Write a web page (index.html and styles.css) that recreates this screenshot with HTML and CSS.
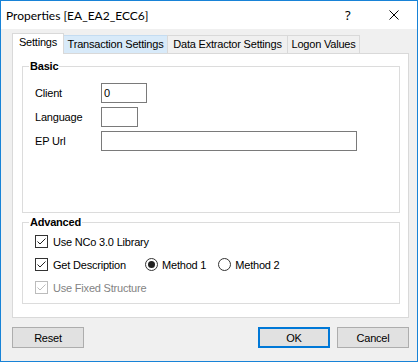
FILE: index.html
```html
<!DOCTYPE html>
<html lang="en">
<head>
    <meta charset="UTF-8">
    <title>Properties [EA_EA2_ECC6]</title>
    <link rel="stylesheet" href="styles.css">
</head>
<body>
    <div class="window">
        <div class="titlebar">
            <span class="title">Properties [EA_EA2_ECC6]</span>
            <span class="help">?</span>
            <span class="close">
                <svg width="10" height="10" viewBox="0 0 10 10"><path d="M0.5 0.5 L9.5 9.5 M9.5 0.5 L0.5 9.5" stroke="#000" stroke-width="1" fill="none"/></svg>
            </span>
        </div>

        <div class="client">
            <!-- Tab strip -->
            <div class="tabs">
                <div class="tab active t1">Settings</div>
                <div class="tab hot t2">Transaction Settings</div>
                <div class="tab t3">Data Extractor Settings</div>
                <div class="tab t4">Logon Values</div>
            </div>

            <div class="panel">
                <!-- Basic group -->
                <fieldset class="group basic">
                    <legend>Basic</legend>
                    <div class="fields">
                        <span class="lbl">Client</span>
                        <div class="box w-client">0</div>
                        <span class="lbl">Language</span>
                        <div class="box w-lang"></div>
                        <span class="lbl">EP Url</span>
                        <div class="box w-url"></div>
                    </div>
                </fieldset>

                <!-- Advanced group -->
                <fieldset class="group advanced">
                    <legend>Advanced</legend>
                    <div class="options">
                        <div class="row">
                            <span class="check on"><svg width="11" height="11" viewBox="0 0 11 11"><path d="M1.5 5.5 L4 8 L9.5 2.5" stroke="#222" stroke-width="1" fill="none"/></svg></span>
                            <span class="text">Use NCo 3.0 Library</span>
                        </div>
                        <div class="row">
                            <div class="item-desc">
                                <span class="check on"><svg width="11" height="11" viewBox="0 0 11 11"><path d="M1.5 5.5 L4 8 L9.5 2.5" stroke="#222" stroke-width="1" fill="none"/></svg></span>
                                <span class="text">Get Description</span>
                            </div>
                            <span class="radio on"></span>
                            <span class="text m1">Method 1</span>
                            <span class="radio"></span>
                            <span class="text">Method 2</span>
                        </div>
                        <div class="row disabled">
                            <span class="check on"><svg width="11" height="11" viewBox="0 0 11 11"><path d="M1.5 5.5 L4 8 L9.5 2.5" stroke="#bcbcbc" stroke-width="1" fill="none"/></svg></span>
                            <span class="text">Use Fixed Structure</span>
                        </div>
                    </div>
                </fieldset>
            </div>

            <div class="buttons">
                <button class="btn">Reset</button>
                <span class="spacer"></span>
                <button class="btn default">OK</button>
                <button class="btn">Cancel</button>
            </div>
        </div>
    </div>
</body>
</html>
```

FILE: styles.css
```css
body {
    margin: 0;
    padding: 0;
    font-family: "Liberation Sans", Arial, sans-serif;
    font-size: 11px;
    letter-spacing: -0.2px;
    color: #000;
}
.window {
    width: 418px;
    height: 362px;
    box-sizing: border-box;
    border: 1px solid #1883d7;
    background: #f0f0f0;
    display: flex;
    flex-direction: column;
}
.titlebar {
    height: 28px;
    background: #fff;
    display: flex;
    align-items: center;
    padding-left: 5px;
}
.title {
    font-family: Lato, sans-serif;
    font-size: 12px;
    letter-spacing: 0;
    flex: 1;
}
.help {
    font-family: "Noto Sans", sans-serif;
    font-size: 13px;
    width: 44px;
}
.close {
    width: 28px;
    display: flex;
}
.client {
    padding: 4px 8px 0 11px;
}
.tabs {
    display: flex;
    align-items: flex-end;
    height: 20px;
}
.tab {
    box-sizing: border-box;
    height: 18px;
    border: 1px solid #d9d9d9;
    border-bottom: none;
    margin-left: -1px;
    text-align: center;
    line-height: 17px;
    background: #f0f0f0;
}
.tab.active {
    height: 21px;
    margin-left: 0;
    margin-bottom: -1px;
    background: #fff;
    position: relative;
    z-index: 1;
    line-height: 16px;
}
.tab.hot {
    background: #d8eaf9;
    border-color: #c4dcf1;
}
.t1 { width: 52px; }
.t2 { width: 105px; }
.t3 { width: 121px; }
.t4 { width: 73px; }
.panel {
    height: 265px;
    box-sizing: border-box;
    border: 1px solid #d9d9d9;
    background: #fff;
    padding: 6px 8px 0 9px;
}
.group {
    margin: 0;
    padding: 0;
    border: 1px solid #dcdcdc;
    min-width: 0;
}
.group legend {
    font-weight: bold;
    line-height: 13px;
    margin-left: 6px;
    padding: 0 1px;
}
.basic {
    height: 153px;
    box-sizing: border-box;
}
.advanced {
    margin-top: 3px;
    height: 88px;
    box-sizing: border-box;
}
.fields {
    display: grid;
    grid-template-columns: 66px auto;
    grid-auto-rows: 20px;
    row-gap: 4px;
    align-items: center;
    padding: 10px 0 0 12px;
}
.box {
    box-sizing: border-box;
    height: 20px;
    border: 1px solid #7a7a7a;
    background: #fff;
    padding: 3px 0 0 2px;
    line-height: 13px;
}
.w-client { width: 46px; }
.w-lang { width: 37px; }
.w-url { width: 256px; }
.options {
    padding: 1px 0 0 12px;
}
.row {
    height: 23px;
    display: flex;
    align-items: center;
}
.item-desc {
    display: flex;
    align-items: center;
    width: 110px;
}
.check {
    box-sizing: border-box;
    width: 13px;
    height: 13px;
    border: 1px solid #333;
    background: #fff;
    display: flex;
    margin-right: 5px;
}
.disabled .check {
    border-color: #bcbcbc;
}
.disabled .text {
    color: #838383;
}
.radio {
    box-sizing: border-box;
    width: 13px;
    height: 13px;
    border: 1px solid #333;
    border-radius: 50%;
    background: #fff;
    margin-right: 4px;
    display: flex;
    align-items: center;
    justify-content: center;
}
.radio.on::after {
    content: "";
    width: 7px;
    height: 7px;
    border-radius: 50%;
    background: #222;
}
.m1 {
    margin-right: 12px;
}
.buttons {
    display: flex;
    gap: 7px;
    margin-top: 9px;
}
.spacer {
    flex: 1;
}
.btn {
    width: 72px;
    height: 21px;
    box-sizing: border-box;
    border: 1px solid #adadad;
    background: #e1e1e1;
    font-family: "Liberation Sans", Arial, sans-serif;
    font-size: 11px;
    letter-spacing: -0.2px;
    color: #000;
    padding: 0;
}
.btn.default {
    border: 2px solid #0078d7;
}
```
